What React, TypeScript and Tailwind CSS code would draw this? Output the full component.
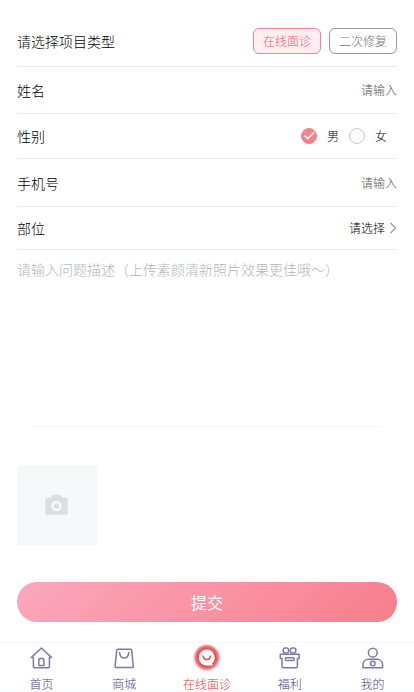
import { useState } from 'react';
import type { ReactNode } from 'react';

const TYPES = ['在线面诊', '二次修复'];
const PARTS = ['眼部', '鼻部', '面部', '胸部'];

function HomeIcon() {
  return (
    <svg viewBox="0 0 24 24" className="w-6 h-6" fill="none" stroke="currentColor" strokeWidth="1.500" strokeLinecap="round" strokeLinejoin="round">
      <path d="M2.200 11.600 12.400 2l10.200 9.600h-2.200v9.200q0 1-1 1h-14q-1 0-1-1v-9.200Z" />
      <path d="M9.800 19.500v-4.600a2.600 2.600 0 0 1 5.200 0v4.600Z" />
    </svg>
  );
}

function ShopIcon() {
  return (
    <svg viewBox="0 0 24 24" className="w-6 h-6" fill="none" stroke="currentColor" strokeWidth="1.500" strokeLinecap="round" strokeLinejoin="round">
      <path d="M5.800 3.300h12.800q1 0 1.100 1l1.600 15.900q.1 1.300-1.200 1.300H4.300q-1.300 0-1.200-1.300L4.700 4.300q.1-1 1.100-1Z" />
      <path d="M7.500 6.400c.4 3.600 2.200 5.600 4.700 5.600s4.300-2 4.700-5.600" />
    </svg>
  );
}

function ConsultIcon() {
  return (
    <svg viewBox="0 0 28 28" className="w-7 h-7" fill="none">
      <defs>
        <radialGradient id="consult-glow">
          <stop offset="0.65" stopColor="#ea5355" />
          <stop offset="0.8" stopColor="#f07678" />
          <stop offset="1" stopColor="#f58d8e" stopOpacity="0" />
        </radialGradient>
      </defs>
      <circle cx="13.800" cy="13.500" r="14" fill="url(#consult-glow)" />
      <path d="M13.800 5.500a8 8 0 1 0 0 16h5q1.200 0 .7-1.100l-.5-1A8 8 0 0 0 13.800 5.500Z" fill="#fff" />
      <path d="M10.200 12.300c.5 2.200 1.800 3.300 3.600 3.300s3.100-1.100 3.600-3.300" stroke="#e84f50" strokeWidth="1.500" strokeLinecap="round" />
    </svg>
  );
}

function GiftIcon() {
  return (
    <svg viewBox="0 0 24 24" className="w-6 h-6" fill="none" stroke="currentColor" strokeWidth="1.500" strokeLinecap="round" strokeLinejoin="round">
      <rect x="5.200" y="1.900" width="5.400" height="5" rx="2" />
      <rect x="12.400" y="1.900" width="5.400" height="5" rx="2" />
      <path d="M2.300 8.300h18.800v4.200h-1.700v8q0 1.300-1.300 1.300h-12.800q-1.300 0-1.300-1.300v-8H2.300Z" />
      <rect x="7.400" y="11.700" width="8.800" height="2.800" rx="1" />
    </svg>
  );
}

function MineIcon() {
  return (
    <svg viewBox="0 0 24 24" className="w-6 h-6" fill="none" stroke="currentColor" strokeWidth="1.500" strokeLinecap="round" strokeLinejoin="round">
      <circle cx="11.800" cy="6.700" r="4.400" />
      <path d="M2 21.700v-2.500c0-3.400 2.300-5.900 5.500-5.900h8.600c3.200 0 5.500 2.500 5.500 5.900v2.500Z" />
      <circle cx="11.800" cy="17.500" r="2.300" />
    </svg>
  );
}

function CameraIcon() {
  return (
    <svg viewBox="0 0 24 24" className="w-6 h-6" fill="#dcdee0">
      <path fillRule="evenodd" d="M7.300 2.700q.6-.9 1.600-.9h5.200q1 0 1.600.9L17.200 4.800h4q1.500 0 1.500 1.500v14q0 1.500-1.500 1.500H1.800Q.3 21.800.3 20.300v-14q0-1.500 1.500-1.500h4ZM11.500 7.800a5.200 5.200 0 1 0 0 10.400A5.200 5.200 0 0 0 11.500 7.800Zm0 2.500a2.700 2.700 0 1 1 0 5.400 2.700 2.700 0 0 1 0-5.400Z" />
    </svg>
  );
}

const NAV = [
  { label: '首页', icon: <HomeIcon /> },
  { label: '商城', icon: <ShopIcon /> },
  { label: '在线面诊', icon: <ConsultIcon />, active: true },
  { label: '福利', icon: <GiftIcon /> },
  { label: '我的', icon: <MineIcon /> },
];

interface RowProps {
  label: string;
  htmlFor?: string;
  className: string;
  children: ReactNode;
}

function Row({ label, htmlFor, className, children }: RowProps) {
  return (
    <div className={`flex items-center justify-between border-b border-[#ebebeb] ${className}`}>
      {htmlFor ? <label htmlFor={htmlFor}>{label}</label> : <span>{label}</span>}
      {children}
    </div>
  );
}

export default function App() {
  const [type, setType] = useState(TYPES[0]);
  const [gender, setGender] = useState('男');

  return (
    <div className="min-h-screen flex flex-col bg-white text-sm font-light text-black font-['Noto_Sans_CJK_SC',sans-serif]">
      <form className="px-[17px] pt-4" onSubmit={(e) => e.preventDefault()}>
        <Row label="请选择项目类型" className="h-[51px]">
          <div className="flex gap-2">
            {TYPES.map((item) => (
              <button
                key={item}
                type="button"
                onClick={() => setType(item)}
                className={`h-[26px] w-[68px] rounded-md border text-xs ${
                  item === type ? 'border-[#f7838f] bg-[#ffeef2] text-[#f55c73]' : 'border-[#999999] text-[#777777]'
                }`}
              >
                {item}
              </button>
            ))}
          </div>
        </Row>

        <Row label="姓名" htmlFor="name" className="h-[47px]">
          <input id="name" placeholder="请输入" className="w-40 text-right text-xs outline-none placeholder:text-[#555555]" />
        </Row>

        <Row label="性别" className="h-[45px]">
          <div className="flex pr-[10px] gap-[10px] text-xs">
            {['男', '女'].map((item) => (
              <label key={item} className="flex items-center gap-[10px]">
                <span className="relative flex w-4 h-4">
                  <input
                    type="radio"
                    name="gender"
                    value={item}
                    checked={gender === item}
                    onChange={() => setGender(item)}
                    className="w-4 h-4 appearance-none rounded-full border border-[#c8c9cc] checked:border-[#f7808c] checked:bg-[#f7808c]"
                  />
                  {gender === item && (
                    <svg viewBox="0 0 16 16" className="absolute inset-0 w-4 h-4 pointer-events-none" fill="none" stroke="#fff" strokeWidth="1.600">
                      <path d="m3.600 7.700 3.200 2.900 6.400-6.200" />
                    </svg>
                  )}
                </span>
                {item}
              </label>
            ))}
          </div>
        </Row>

        <Row label="手机号" htmlFor="phone" className="h-12">
          <input id="phone" type="tel" placeholder="请输入" className="w-40 text-right text-xs outline-none placeholder:text-[#555555]" />
        </Row>

        <Row label="部位" htmlFor="part" className="h-[43px]">
          <div className="flex items-center gap-1">
            <select id="part" defaultValue="" className="w-10 appearance-none text-right text-xs outline-none">
              <option value="">请选择</option>
              {PARTS.map((part) => (
                <option key={part}>{part}</option>
              ))}
            </select>
            <svg viewBox="0 0 8 12" className="w-2 h-3" fill="none" stroke="#969799" strokeWidth="1.100">
              <path d="m1.500 1 5 5-5 5" />
            </svg>
          </div>
        </Row>

        <textarea
          aria-label="问题描述"
          placeholder="请输入问题描述（上传素颜清新照片效果更佳哦～）"
          className="block w-full h-44 pt-[9px] resize-none outline-none placeholder:text-[#b4b5b9]"
        />
        <hr className="mx-[14px] border-[#f5f6f7]" />

        <button type="button" aria-label="上传照片" className="mt-[38px] flex w-20 h-20 items-center justify-center bg-[#f7f8fa]">
          <CameraIcon />
        </button>

        <button type="submit" className="mt-[37px] w-full h-10 rounded-full bg-linear-135 from-[#fba7bd] to-[#f77e8b] text-base font-normal text-white">
          提交
        </button>
      </form>

      <nav className="mt-auto flex border-y border-[#f5f6f7]">
        {NAV.map((item) => (
          <a
            key={item.label}
            href="#"
            className={`flex flex-1 flex-col items-center gap-1 text-xs ${item.active ? 'text-[#e6393b]' : 'text-[#4a437f]'}`}
          >
            <span className="flex h-[30px] items-center text-[#7f79a8]">{item.icon}</span>
            <span className="leading-[14px]">{item.label}</span>
          </a>
        ))}
      </nav>
    </div>
  );
}
